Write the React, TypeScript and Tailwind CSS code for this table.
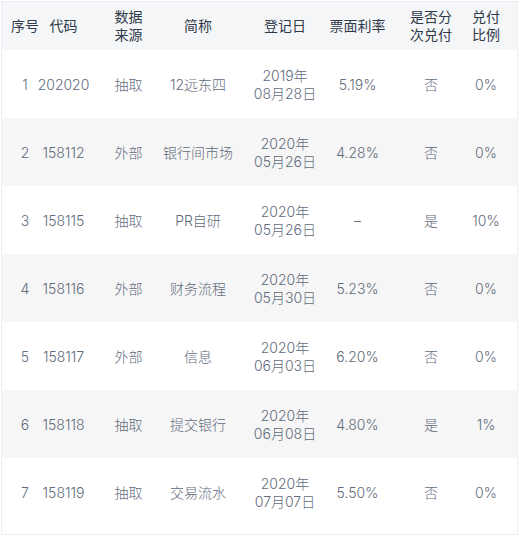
import React from "react";

type Row = {
  no: string;
  code: string;
  src: string;
  name: string;
  y: string;
  md: string;
  rate: string;
  split: string;
  ratio: string;
};

const rows: Row[] = [
  { no: "1", code: "202020", src: "抽取", name: "12远东四", y: "2019年", md: "08月28日", rate: "5.19%", split: "否", ratio: "0%" },
  { no: "2", code: "158112", src: "外部", name: "银行间市场", y: "2020年", md: "05月26日", rate: "4.28%", split: "否", ratio: "0%" },
  { no: "3", code: "158115", src: "抽取", name: "PR自研", y: "2020年", md: "05月26日", rate: "–", split: "是", ratio: "10%" },
  { no: "4", code: "158116", src: "外部", name: "财务流程", y: "2020年", md: "05月30日", rate: "5.23%", split: "否", ratio: "0%" },
  { no: "5", code: "158117", src: "外部", name: "信息", y: "2020年", md: "06月03日", rate: "6.20%", split: "否", ratio: "0%" },
  { no: "6", code: "158118", src: "抽取", name: "提交银行", y: "2020年", md: "06月08日", rate: "4.80%", split: "是", ratio: "1%" },
  { no: "7", code: "158119", src: "抽取", name: "交易流水", y: "2020年", md: "07月07日", rate: "5.50%", split: "否", ratio: "0%" },
];

const grid = "grid grid-cols-[42px_52px_67px_78px_80px_73px_64px_60px]";
const cell = "flex items-center justify-center whitespace-nowrap text-center";
const pads = ["pl-[4px]", "pr-[13px]", "pr-[2px]", "pr-[8px]", "pl-[8px]", "", "pl-[10px]", "pr-[4px]"];

export default function App() {
  return (
    <div
      className="w-[520px] h-[536px] bg-white p-px"
      style={{ fontFamily: 'Inter, "Noto Sans CJK SC", sans-serif' }}
    >
      <div className="w-[517px] h-[534px] border border-[#ebeef3] bg-white text-[14px] leading-[18px] font-light">
        <div className={`${grid} h-[48px] bg-[#f5f6f7] text-[#2f3a4b] font-normal`}>
          <div className={`${cell} ${pads[0]}`}>序号</div>
          <div className={`${cell} ${pads[1]}`}>代码</div>
          <div className={`${cell} ${pads[2]}`}>数据<br />来源</div>
          <div className={`${cell} ${pads[3]}`}>简称</div>
          <div className={`${cell} ${pads[4]}`}>登记日</div>
          <div className={`${cell} ${pads[5]}`}>票面利率</div>
          <div className={`${cell} ${pads[6]}`}>是否分<br />次兑付</div>
          <div className={`${cell} ${pads[7]}`}>兑付<br />比例</div>
        </div>
        {rows.map((r, i) => (
          <div
            key={r.no}
            className={`${grid} h-[68px] pt-[2px] text-[#5f6b7c] ${i % 2 === 1 ? "bg-[#f6f6f6]" : "bg-white"}`}
          >
            <div className={`${cell} ${pads[0]}`}>{r.no}</div>
            <div className={`${cell} ${pads[1]}`}>{r.code}</div>
            <div className={`${cell} ${pads[2]}`}>{r.src}</div>
            <div className={`${cell} ${pads[3]}`}>{r.name}</div>
            <div className={`${cell} ${pads[4]} flex-col`}>
              <span>{r.y}</span>
              <span>{r.md}</span>
            </div>
            <div className={`${cell} ${pads[5]}`}>{r.rate}</div>
            <div className={`${cell} ${pads[6]}`}>{r.split}</div>
            <div className={`${cell} ${pads[7]}`}>{r.ratio}</div>
          </div>
        ))}
      </div>
    </div>
  );
}
